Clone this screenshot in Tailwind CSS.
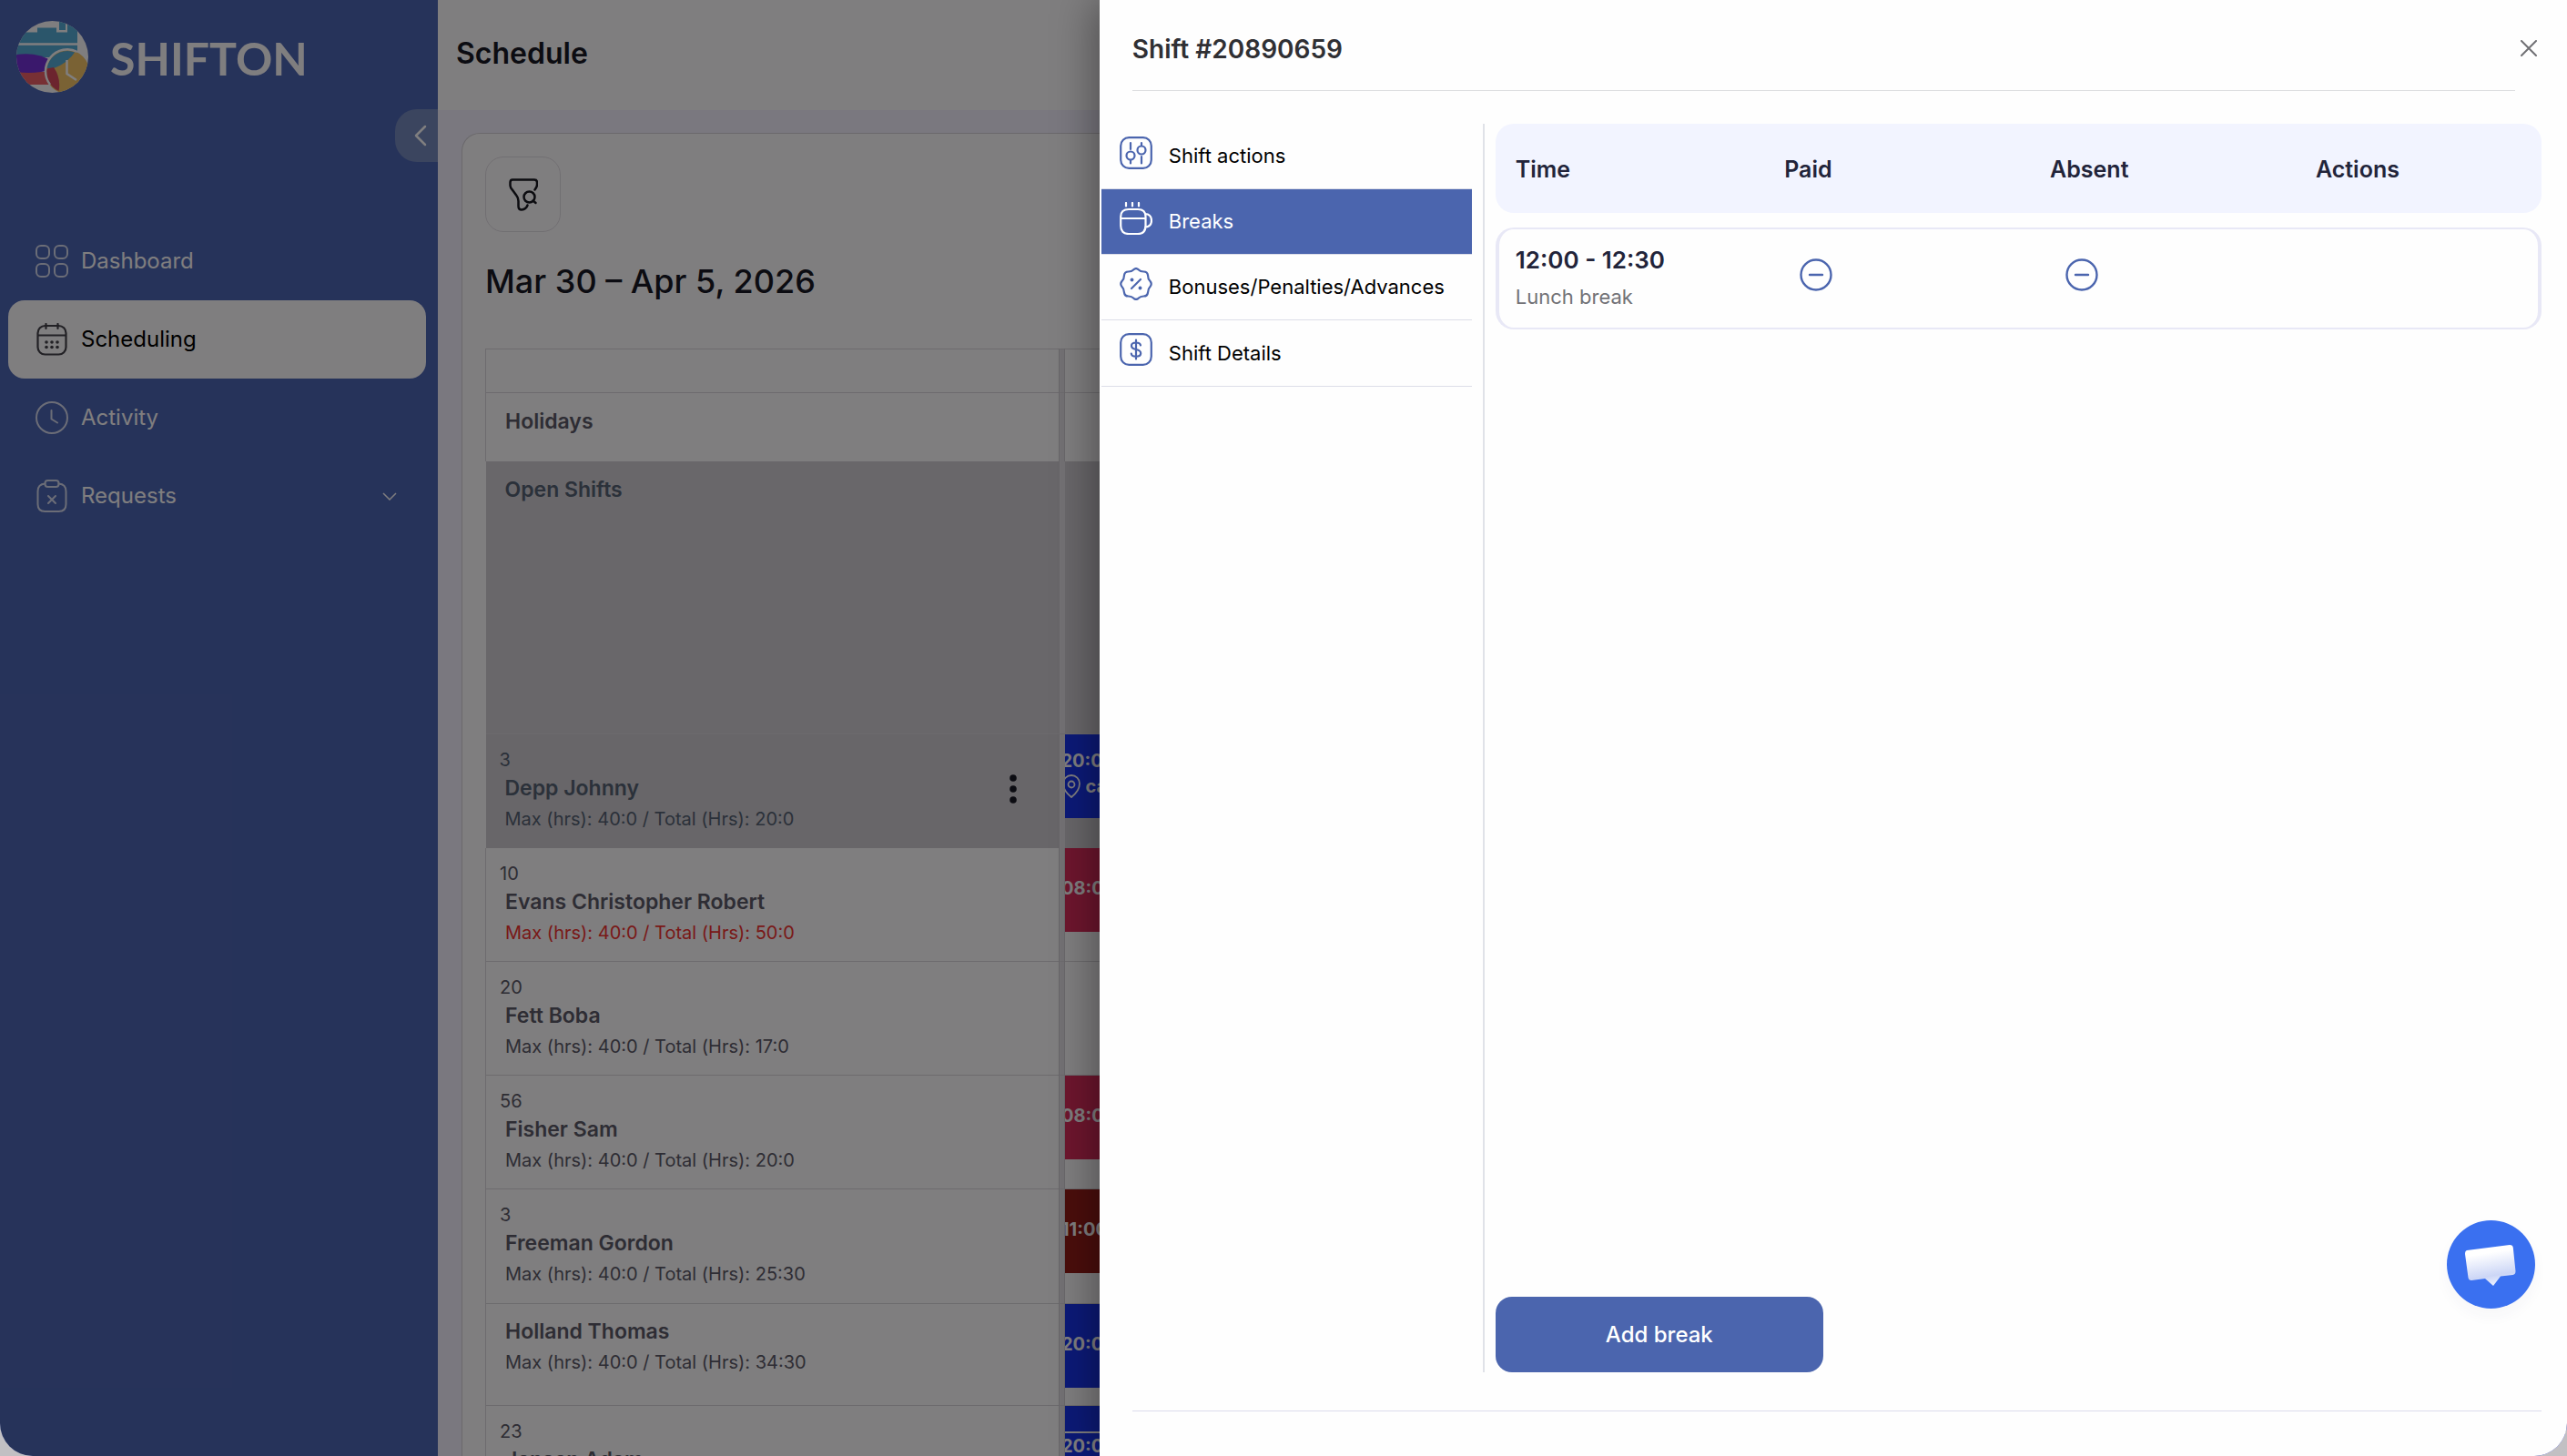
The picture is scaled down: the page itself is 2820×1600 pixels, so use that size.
<!DOCTYPE html>
<html lang="en">
<head>
<meta charset="utf-8">
<title>Shifton – Schedule</title>
<script src="https://cdn.jsdelivr.net/npm/@tailwindcss/browser@4"></script>
</head>
<body class="bg-[#c2c0c3] font-['Inter',sans-serif] text-[#181824]">
<div class="relative flex h-screen overflow-hidden rounded-b-[36px] bg-[#fffcff]">

  <!-- Sidebar -->
  <aside class="relative flex w-[481px] shrink-0 flex-col bg-[#4d66b4] text-[#fffcff]">
    <a href="#" class="ml-[18px] mt-[23px] flex items-center gap-6">
      <svg class="size-[79px]" viewBox="0 0 79 79">
        <defs>
          <clipPath id="disc"><circle cx="39.5" cy="39.5" r="39.5"/></clipPath>
          <clipPath id="dial"><circle cx="56" cy="56" r="23"/></clipPath>
        </defs>
        <g clip-path="url(#disc)">
          <rect width="79" height="79" fill="#fffcff"/>
          <path d="M0 12.500H23V7.500H44V12.500H56V0H67V40H0Z" fill="#56acd6"/>
          <rect x="47" y="0" width="7" height="10" fill="#56acd6"/>
          <path d="M0 56H36V70H0Z" fill="#ee6068"/>
          <path d="M0 37Q24 34 38 44Q41 48 41 53Q20 59 0 56Z" fill="#7430d8"/>
          <path d="M0 25.500H67" stroke="#fffcff" stroke-width="2.500"/>
          <circle cx="56" cy="56" r="24" fill="#f4c468"/>
          <g clip-path="url(#dial)">
            <path d="M30 30H67Q58 46 41 52H30Z" fill="#56acd6"/>
            <path d="M30 53L41 51Q50 64 46 80H30Z" fill="#d8485c"/>
          </g>
          <path d="M37 71A24 24 0 0 1 67 35" transform="translate(0 -1)" fill="none" stroke="#fffcff" stroke-width="2.500"/>
          <path d="M55.500 43V58L66 65" fill="none" stroke="#fffcff" stroke-width="2.500"/>
        </g>
      </svg>
      <span class="pt-[2px] font-['Lato',sans-serif] text-[50px] font-bold leading-none">SHIFTON</span>
    </a>
    <button type="button" aria-label="Collapse menu" class="mt-[18px] flex h-[58px] w-[47px] items-center self-end rounded-l-[24px] bg-[#768abe] pl-5">
      <svg class="h-6 w-4" viewBox="0 0 16 24" fill="none" stroke="currentColor" stroke-width="2.500" stroke-linecap="round" stroke-linejoin="round"><path d="M13 2L3 12L13 22"/></svg>
    </button>
    <nav class="mt-[66px] flex flex-col px-[9px] pr-[13px] text-[24px]">
      <a href="#" class="flex h-[86px] items-center gap-[14px] pl-[30px]">
        <svg class="size-9 text-[#d6daee]" viewBox="0 0 36 36" fill="none" stroke="currentColor" stroke-width="2"><rect x="1" y="1" width="14" height="14" rx="5"/><rect x="21" y="1" width="14" height="14" rx="5"/><rect x="1" y="21" width="14" height="14" rx="5"/><rect x="21" y="21" width="14" height="14" rx="5"/></svg>
        Dashboard</a>
      <a href="#" aria-current="page" class="flex h-[86px] items-center gap-[14px] rounded-[18px] bg-[#fffcff] pl-[30px] text-black">
        <svg class="size-9 text-[#44424a]" viewBox="0 0 36 36" fill="none" stroke="currentColor" stroke-width="2.200" stroke-linecap="round"><rect x="2.500" y="3" width="31" height="31.500" rx="8"/><path d="M3 13.500H33M11.500 1V6M24.500 1V6"/><g fill="currentColor" stroke="none"><circle cx="12" cy="21" r="1.800"/><circle cx="18" cy="21" r="1.800"/><circle cx="24" cy="21" r="1.800"/><circle cx="12" cy="26.500" r="1.800"/><circle cx="18" cy="26.500" r="1.800"/><circle cx="24" cy="26.500" r="1.800"/></g></svg>
        Scheduling</a>
      <a href="#" class="flex h-[86px] items-center gap-[14px] pl-[30px]">
        <svg class="size-9 text-[#d6daee]" viewBox="0 0 36 36" fill="none" stroke="currentColor" stroke-width="2" stroke-linecap="round" stroke-linejoin="round"><circle cx="18" cy="18" r="17"/><path d="M17.500 10V19.500L24 23.500"/></svg>
        Activity</a>
      <a href="#" class="flex h-[86px] items-center gap-[14px] pl-[30px]">
        <svg class="size-9 text-[#d6daee]" viewBox="0 0 36 36" fill="none" stroke="currentColor" stroke-width="2" stroke-linecap="round" stroke-linejoin="round"><path d="M10.500 4.500Q2.500 5 2.500 13V27Q2.500 35 10.500 35H25.500Q33.500 35 33.500 27V13Q33.500 5 25.500 4.500"/><rect x="10.500" y="1" width="15" height="7" rx="3"/><path d="M14 18L22 26M22 18L14 26"/></svg>
        <span class="flex-1">Requests</span>
        <svg class="mr-8 h-[9px] w-4" viewBox="0 0 16 9" fill="none" stroke="currentColor" stroke-width="1.500"><path d="M1 1L8 8L15 1"/></svg></a>
    </nav>
  </aside>

  <!-- Schedule page -->
  <main class="flex min-w-0 flex-1 flex-col bg-[#f4f1ff]">
    <header class="flex h-[121px] shrink-0 items-center bg-[#fffcff] px-5 pb-[3px]"><h1 class="text-[32px] font-semibold leading-[38px]">Schedule</h1></header>
    <section class="ml-[26px] mt-[25px] flex min-h-0 flex-1 flex-col overflow-hidden rounded-tl-[20px] border-l border-t border-[#d6d2d8] bg-[#fffcff] pl-[25px]">
      <button type="button" aria-label="Filter" class="mt-[25px] flex size-[83px] shrink-0 items-center justify-center rounded-[20px] border border-[#e2dee4]">
        <svg class="h-9 w-8" viewBox="0 0 32 36" fill="none" stroke="#181820" stroke-width="2.500" stroke-linecap="round" stroke-linejoin="round"><path d="M28.500 12.500Q31 9.500 31 7V4.500Q31 1.500 28 1.500H4Q1.500 1.500 1.500 4.500V8Q1.500 10.500 4.500 13.500L8.500 19Q10.500 21.500 10.500 25V30.500Q10.500 34.500 14 34.500Q19 34 20.500 29.500"/><circle cx="22.500" cy="20.500" r="6"/><path d="M26.500 24.500L29.500 27"/></svg>
      </button>
      <h2 class="mt-8 text-[36px] font-medium leading-[44px]">Mar 30 – Apr 5, 2026</h2>
      <table class="mt-[52px] w-full table-fixed border-collapse border-t border-[#dad6dc] text-[#5c5a68]">
        <colgroup><col class="w-[630px]"><col class="w-[6px]"><col></colgroup>
        <tbody class="align-top">
          <tr class="h-12 border-b border-[#dad6dc]"><td class="border-l border-[#dad6dc]"></td><td class="border-x border-[#d2ced4] bg-[#e6e2e8]"></td><td></td></tr>
          <tr class="h-[75px]"><td class="border-l border-[#dad6dc] pl-[21px] pt-[17px] text-[23px] font-semibold leading-7">Holidays</td><td class="border-x border-[#d2ced4] bg-[#e6e2e8]"></td><td></td></tr>
          <tr class="h-[300px] bg-[#d2ced4] text-[#566274]"><td class="pl-[21px] pt-[17px] text-[23px] font-semibold leading-7">Open Shifts</td><td class="bg-[#e6e2e8]"></td><td></td></tr>
          <tr class="h-[125px] border-t border-[#d8d4da] bg-[#d0ccd2] text-[#566274]">
            <td class="pl-[15px] pt-4">
              <div class="flex items-center justify-between">
                <div>
                  <div class="mb-[5px] text-[20px] leading-6">3</div>
                  <div class="pl-[6px] text-[23px] font-semibold leading-7">Depp Johnny</div>
                  <div class="mt-[10px] pl-[6px] text-[20px] leading-5">Max (hrs): 40:0 / Total (Hrs): 20:0</div>
                </div>
                <button type="button" aria-label="More" class="mr-[47px]"><svg class="h-8 w-2" viewBox="0 0 8 32" fill="#181824"><circle cx="4" cy="4" r="3.800"/><circle cx="4" cy="16" r="3.800"/><circle cx="4" cy="28" r="3.800"/></svg></button>
              </div>
            </td>
            <td class="bg-[#e6e2e8]"></td>
            <td><div class="h-[92px] overflow-hidden bg-[#1834f0] pt-[15px] text-[20px] font-bold leading-7 text-[#fffcff]"><div class="-ml-1">20:00 - 04:00</div><div class="-ml-[3px] flex items-center gap-[6px]"><svg class="h-[26px] w-5" viewBox="0 0 20 26" fill="none" stroke="currentColor" stroke-width="1.800"><path d="M10 25Q1 18 1 10A9 9 0 0 1 19 10Q19 18 10 25Z"/><circle cx="10" cy="11" r="3.500"/></svg>cafe</div></div></td>
          </tr>
          <tr class="h-[125px] border-b border-[#dad6dc]">
            <td class="border-l border-[#dad6dc] pl-[15px] pt-4">
              <div class="mb-[5px] text-[20px] leading-6">10</div>
              <div class="pl-[6px] text-[23px] font-semibold leading-7">Evans Christopher Robert</div>
              <div class="mt-[10px] pl-[6px] text-[20px] leading-5 text-[#f23230]">Max (hrs): 40:0 / Total (Hrs): 50:0</div>
            </td>
            <td class="border-x border-[#d2ced4] bg-[#e6e2e8]"></td>
            <td><div class="h-[92px] overflow-hidden bg-[#dc2c5c] pt-[30px] text-[20px] font-bold leading-7 text-[#fffcff]"><div class="-ml-1">08:00 - 18:00</div></div></td>
          </tr>
          <tr class="h-[125px] border-b border-[#dad6dc]">
            <td class="border-l border-[#dad6dc] pl-[15px] pt-4">
              <div class="mb-[5px] text-[20px] leading-6">20</div>
              <div class="pl-[6px] text-[23px] font-semibold leading-7">Fett Boba</div>
              <div class="mt-[10px] pl-[6px] text-[20px] leading-5">Max (hrs): 40:0 / Total (Hrs): 17:0</div>
            </td>
            <td class="border-x border-[#d2ced4] bg-[#e6e2e8]"></td><td></td>
          </tr>
          <tr class="h-[125px] border-b border-[#dad6dc]">
            <td class="border-l border-[#dad6dc] pl-[15px] pt-4">
              <div class="mb-[5px] text-[20px] leading-6">56</div>
              <div class="pl-[6px] text-[23px] font-semibold leading-7">Fisher Sam</div>
              <div class="mt-[10px] pl-[6px] text-[20px] leading-5">Max (hrs): 40:0 / Total (Hrs): 20:0</div>
            </td>
            <td class="border-x border-[#d2ced4] bg-[#e6e2e8]"></td>
            <td><div class="h-[92px] overflow-hidden bg-[#dc2c5c] pt-[30px] text-[20px] font-bold leading-7 text-[#fffcff]"><div class="-ml-1">08:00 - 18:00</div></div></td>
          </tr>
          <tr class="h-[126px] border-b border-[#dad6dc]">
            <td class="border-l border-[#dad6dc] pl-[15px] pt-4">
              <div class="mb-[5px] text-[20px] leading-6">3</div>
              <div class="pl-[6px] text-[23px] font-semibold leading-7">Freeman Gordon</div>
              <div class="mt-[10px] pl-[6px] text-[20px] leading-5">Max (hrs): 40:0 / Total (Hrs): 25:30</div>
            </td>
            <td class="border-x border-[#d2ced4] bg-[#e6e2e8]"></td>
            <td><div class="h-[92px] overflow-hidden bg-[#961c18] pt-[30px] text-[20px] font-bold leading-7 text-[#fffcff]"><div class="-ml-1">11:00 - 19:30</div></div></td>
          </tr>
          <tr class="h-[112px] border-b border-[#dad6dc]">
            <td class="border-l border-[#dad6dc] pl-[21px] pt-4">
              <div class="text-[23px] font-semibold leading-7">Holland Thomas</div>
              <div class="mt-[10px] text-[20px] leading-5">Max (hrs): 40:0 / Total (Hrs): 34:30</div>
            </td>
            <td class="border-x border-[#d2ced4] bg-[#e6e2e8]"></td>
            <td><div class="h-[92px] overflow-hidden bg-[#1834f0] pt-[30px] text-[20px] font-bold leading-7 text-[#fffcff]"><div class="-ml-1">20:00 - 07:30</div></div></td>
          </tr>
          <tr class="h-[125px]">
            <td class="border-l border-[#dad6dc] pl-[15px] pt-4">
              <div class="mb-[5px] text-[20px] leading-6">23</div>
              <div class="pl-[6px] text-[23px] font-semibold leading-7">Jensen Adam</div>
              <div class="mt-[10px] pl-[6px] text-[20px] leading-5">Max (hrs): 40:0 / Total (Hrs): 40:0</div>
            </td>
            <td class="border-x border-[#d2ced4] bg-[#e6e2e8]"></td>
            <td><div class="mb-[2px] h-7 bg-[#1834f0]"></div><div class="h-[92px] overflow-hidden bg-[#1834f0] text-[20px] font-bold leading-7 text-[#fffcff]"><div class="-ml-1">20:00 - 04:00</div></div></td>
          </tr>
        </tbody>
      </table>
    </section>
  </main>

  <div class="absolute inset-0 bg-black/50"></div>

  <!-- Shift drawer -->
  <div role="dialog" aria-labelledby="drawer-title" class="absolute inset-y-0 right-0 flex w-[57.17%] flex-col bg-[#fefefe] shadow-[-4px_0_44px_rgba(0,0,0,0.4)]">
    <header class="flex h-[100px] shrink-0 pl-9">
      <h2 id="drawer-title" class="flex flex-1 items-center border-b border-[#dcdddf] pt-2 text-[28px] font-semibold leading-9 text-[#303034]">Shift #20890659</h2>
      <button type="button" aria-label="Close" class="flex w-[57px] items-center pl-[6px] pt-[5px] text-[#707074]"><svg class="size-[18px]" viewBox="0 0 18 18" fill="none" stroke="currentColor" stroke-width="2" stroke-linecap="round"><path d="M1 1L17 17M17 1L1 17"/></svg></button>
    </header>
    <div class="mt-9 flex min-h-0 flex-1 pl-[2px]">
      <nav class="mr-3 w-[407px] shrink-0 text-[22px] text-black">
        <a href="#" class="flex h-[72px] items-center gap-[18px] border-b border-[#dcdee8] pl-5">
          <svg class="mb-2 size-9 text-[#4b65ae]" viewBox="0 0 36 36" fill="none" stroke="currentColor" stroke-width="2.200" stroke-linecap="round"><rect x="1.200" y="1.200" width="33.600" height="33.600" rx="9"/><path d="M12 7V14M12 26V29.500M24 7V9.500M24 22V29.500"/><circle cx="12" cy="21" r="4.500"/><circle cx="24" cy="15" r="4.500"/></svg>
          Shift actions</a>
        <a href="#" aria-current="page" class="flex h-[72px] items-center gap-[18px] border-b border-[#dcdee8] bg-[#4b65ae] pl-5 text-white">
          <svg class="mb-2 size-9" viewBox="0 0 36 36" fill="none" stroke="currentColor" stroke-width="2.200" stroke-linecap="round"><path d="M7 1V4.500M14 1V4.500M21 1V4.500"/><path d="M10 8H20Q28.500 8 28.500 16V26Q28.500 35 20 35H10Q1.200 35 1.200 26V16Q1.200 8 10 8ZM1.500 18H28.500M28 13Q35 13.500 35 20.500Q35 26.500 28 28"/></svg>
          Breaks</a>
        <a href="#" class="flex h-[72px] items-center gap-[18px] border-b border-[#dcdee8] pl-5">
          <svg class="mb-2 size-9 text-[#4b65ae]" viewBox="0 0 36 36" fill="none" stroke="currentColor" stroke-width="2.200" stroke-linecap="round" stroke-linejoin="round"><path d="M15.500 2.200Q18 0 20.500 2.200Q23 4.600 26.500 4.500Q30.500 4.500 31 8.500Q31 12.500 33.500 15Q36 18 33.500 21Q31 23.500 31 27.500Q30.500 31.500 26.500 31.500Q23 31.400 20.500 33.800Q18 36 15.500 33.800Q13 31.400 9.500 31.500Q5.500 31.500 5 27.500Q5 23.500 2.500 21Q0 18 2.500 15Q5 12.500 5 8.500Q5.500 4.500 9.500 4.500Q13 4.600 15.500 2.200Z"/><path d="M23 13L13 23"/><g fill="currentColor" stroke="none"><circle cx="13.500" cy="13.500" r="1.900"/><circle cx="22.500" cy="22.500" r="1.900"/></g></svg>
          Bonuses/Penalties/Advances</a>
        <a href="#" class="flex h-[73px] items-center gap-[18px] border-b border-[#dcdee8] pl-5">
          <svg class="mb-2 size-9 text-[#4b65ae]" viewBox="0 0 36 36" fill="none" stroke="currentColor" stroke-width="2.200" stroke-linecap="round"><rect x="1.200" y="1.200" width="33.600" height="33.600" rx="9"/><path d="M18 7.500V28.500M23 13.500Q22.500 10.500 18 10.500Q13 10.500 13 14Q13 17 18 18Q23.200 19 23.200 22.300Q23.200 25.700 18 25.700Q13 25.700 12.800 22.500"/></svg>
          Shift Details</a>
      </nav>
      <div class="mr-7 flex min-w-0 flex-1 flex-col border-l-2 border-[#e0e2e8] pl-3">
        <table class="-mt-4 w-full table-fixed border-separate border-spacing-x-0 border-spacing-y-4 text-left text-[#22243a]">
          <colgroup><col class="w-[25.7%]"><col class="w-[25.4%]"><col class="w-[25.4%]"><col></colgroup>
          <thead>
            <tr class="h-[98px] text-[25px]">
              <th scope="col" class="rounded-l-[20px] bg-[#f2f4ff] pl-[22px] pt-[3px] font-semibold">Time</th>
              <th scope="col" class="bg-[#f2f4ff] pl-[22px] pt-[3px] font-semibold">Paid</th>
              <th scope="col" class="bg-[#f2f4ff] pl-[22px] pt-[3px] font-semibold">Absent</th>
              <th scope="col" class="rounded-r-[20px] bg-[#f2f4ff] pl-[22px] pt-[3px] font-semibold">Actions</th>
            </tr>
          </thead>
          <tbody>
            <tr class="h-[112px]">
              <td class="rounded-l-[20px] border-y-2 border-l-4 border-[#e8e8f6] pl-[18px]">
                <div class="text-[26px] font-semibold leading-[30px]">12:00 - 12:30</div>
                <div class="mt-[10px] text-[22px] leading-[30px] text-[#727276]">Lunch break</div>
              </td>
              <td class="border-y-2 border-[#e8e8f6] pl-[39px]"><svg class="mb-2 size-9" viewBox="0 0 36 36" fill="none" stroke="#4b65ae" stroke-width="2.400" stroke-linecap="round"><circle cx="18" cy="18" r="16.500"/><path d="M11 18H25"/></svg></td>
              <td class="border-y-2 border-[#e8e8f6] pl-[39px]"><svg class="mb-2 size-9" viewBox="0 0 36 36" fill="none" stroke="#4b65ae" stroke-width="2.400" stroke-linecap="round"><circle cx="18" cy="18" r="16.500"/><path d="M11 18H25"/></svg></td>
              <td class="rounded-r-[20px] border-y-2 border-r-4 border-[#e8e8f6]"></td>
            </tr>
          </tbody>
        </table>
        <button type="button" class="mt-auto h-[83px] w-[360px] rounded-[18px] bg-[#4b65ae] text-[24px] font-medium text-white">Add break</button>
      </div>
    </div>
    <footer class="ml-9 mr-7 mt-[42px] h-[50px] shrink-0 border-t border-[#dcdcec]"></footer>
    <button type="button" aria-label="Open chat" class="absolute bottom-[162px] right-[35px] size-[97px] rounded-full bg-[#3a70f0] shadow-[0_8px_16px_rgba(60,40,100,0.04)]">
      <svg class="size-full" viewBox="0 0 97 97">
        <defs><linearGradient id="bubble" x1="0.4" y1="0" x2="0.6" y2="1"><stop offset="0.2" stop-color="#fff"/><stop offset="0.75" stop-color="#ccd6f6"/><stop offset="1" stop-color="#eef2ff"/></linearGradient></defs>
        <path d="M22 33L69 27Q72.500 27 72.800 30L75.500 56Q75.500 59.500 72.500 60L59 61.500L51 72L42 64L27 66Q24 66 23.500 63L20 37Q20 33.500 22 33Z" fill="url(#bubble)"/>
      </svg>
    </button>
  </div>
</div>
</body>
</html>
